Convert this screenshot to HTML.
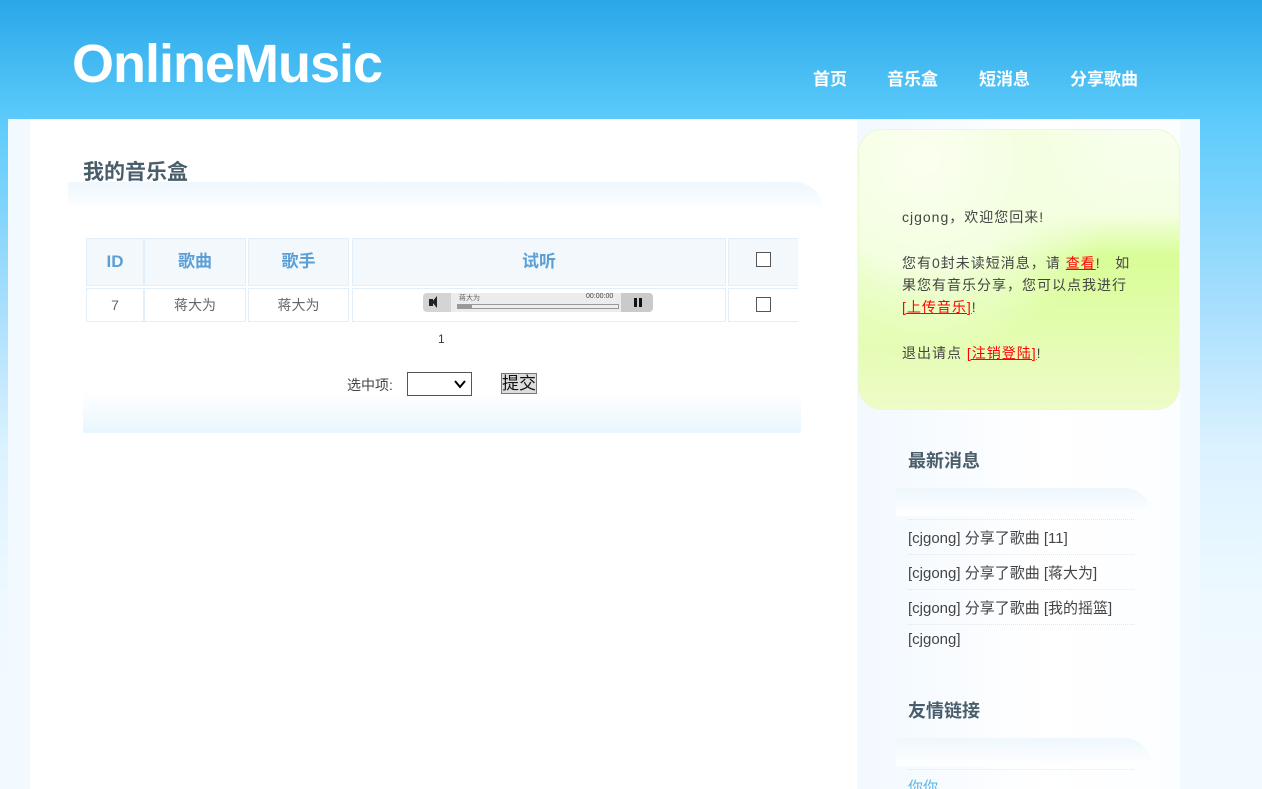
<!DOCTYPE html>
<html><head><meta charset="utf-8"><style>
*{margin:0;padding:0;box-sizing:border-box}
html,body{width:1262px;height:789px;overflow:hidden}
body{font-family:"Liberation Sans","Noto Sans CJK SC",sans-serif;font-size:14px;color:#444;position:relative;
background:linear-gradient(#29a7e8 0px,#5ccbfb 119px,#a5defd 300px,#dcf2ff 450px,#eef9ff 600px,#f2faff 789px)}
.abs{position:absolute}
.logo{left:72px;top:33px;font-size:54px;font-weight:bold;color:#fff;letter-spacing:-1px}
.nav{top:65px;font-size:17px;font-weight:bold;color:#fff}
.wrap{left:8px;top:119px;width:1192px;height:670px;background:#f2f9ff}
.main{left:30px;top:119px;width:827px;height:670px;background:#fff}
.side{left:857px;top:119px;width:323px;height:670px;background:linear-gradient(90deg,#f2f9ff,#fff 60%,#fbfdff)}
h2{font-size:21px;font-weight:bold;color:#4a5d6a}
.band{background:linear-gradient(#eef7fe,#fff)}
.c{position:absolute;border:1px solid #e2eef8;text-align:center;color:#666;font-size:14px}
.h{top:238px;height:48px;background:#f3f8fd;color:#5a9fd6;font-size:17px;font-weight:bold;line-height:46px}
.r{top:288px;height:34px;line-height:32px}
.cb{display:inline-block;width:15px;height:15px;border:1px solid #555;background:#fff;vertical-align:middle}
.green{left:858px;top:129px;width:322px;height:281px;border-radius:24px;
background:radial-gradient(ellipse at 20% 10%,#fbfff0 0,#f3ffe0 30%,transparent 55%),linear-gradient(#f8ffee 0,#f4ffe2 30%,#d9fd98 45%,#e0fda8 65%,#eefcc8 100%);border:1px solid #eafad0}
.gt{left:902px;font-size:14px;color:#444;line-height:22px;white-space:nowrap;letter-spacing:1px}
a{color:red;text-decoration:underline}
.news{left:908px;font-size:15px;color:#444}
.dot{left:908px;width:226px;border-top:1px dotted #dfe8ee}
</style></head><body>
<div class="abs logo">OnlineMusic</div>
<div class="abs nav" style="left:813px">首页</div>
<div class="abs nav" style="left:887px">音乐盒</div>
<div class="abs nav" style="left:979px">短消息</div>
<div class="abs nav" style="left:1070px">分享歌曲</div>

<div class="abs wrap"></div>
<div class="abs main"></div>
<div class="abs side"></div>

<div class="abs band" style="left:68px;top:182px;width:756px;height:30px;border-top-right-radius:30px"></div>
<h2 class="abs" style="left:83px;top:156px">我的音乐盒</h2>

<div class="c h" style="left:86px;width:58px">ID</div>
<div class="c h" style="left:144px;width:102px">歌曲</div>
<div class="c h" style="left:248px;width:101px">歌手</div>
<div class="c h" style="left:352px;width:374px">试听</div>
<div class="c h" style="left:728px;width:70px;border-right:none;font-weight:normal"><span class="cb" style="margin-top:-6px"></span></div>
<div class="c r" style="left:86px;width:58px">7</div>
<div class="c r" style="left:144px;width:102px">蒋大为</div>
<div class="c r" style="left:248px;width:101px">蒋大为</div>
<div class="c r" style="left:352px;width:374px"></div>
<div class="c r" style="left:728px;width:70px;border-right:none"><span class="cb" style="margin-top:-4px"></span></div>

<div class="abs" style="left:423px;top:293px;width:230px;height:19px;background:#ececec;border-radius:4px">
<div class="abs" style="left:0;top:0;width:28px;height:19px;background:#d4d4d4;border-radius:4px 0 0 4px"></div>
<div class="abs" style="left:6px;top:6px;width:4px;height:7px;background:#222"></div>
<div class="abs" style="left:9px;top:3px;width:0;height:0;border-top:6px solid transparent;border-bottom:6px solid transparent;border-right:5px solid #222"></div>
<div class="abs" style="left:36px;top:0px;font-size:7px;color:#666">蒋大为</div>
<div class="abs" style="left:163px;top:0px;font-size:7px;color:#444">00:00:00</div>
<div class="abs" style="left:34px;top:11px;width:162px;height:5px;border:1px solid #999;background:#eee"></div>
<div class="abs" style="left:35px;top:12px;width:14px;height:4px;background:#999"></div>
<div class="abs" style="left:198px;top:0;width:32px;height:19px;background:#cacaca;border-radius:0 4px 4px 0"></div>
<div class="abs" style="left:211px;top:5px;width:3px;height:9px;background:#111"></div>
<div class="abs" style="left:216px;top:5px;width:3px;height:9px;background:#111"></div>
</div>

<div class="abs" style="left:438px;top:332px;font-size:12px;color:#335">1</div>
<div class="abs" style="left:347px;top:375px;font-size:14px;color:#444">选中项:</div>
<div class="abs" style="left:83px;top:392px;width:718px;height:41px;background:linear-gradient(#fff,#e9f6fe)"></div>
<div class="abs" style="left:407px;top:372px;width:65px;height:24px;border:1px solid #555;background:#fff">
<svg class="abs" style="left:46px;top:6px" width="12" height="10"><path d="M1 2 L6 8 L11 2" stroke="#000" stroke-width="2" fill="none"/></svg></div>
<div class="abs" style="left:501px;top:373px;width:36px;height:21px;border:1px solid #777;background:#ddd;font-size:17px;line-height:19px;text-align:center;color:#111">提交</div>

<div class="abs green"></div>
<div class="abs gt" style="top:206px">cjgong，欢迎您回来!</div>
<div class="abs gt" style="top:252px">您有0封未读短消息，请 <a>查看</a>!&nbsp;&nbsp; 如<br>果您有音乐分享，您可以点我进行<br><a>[上传音乐]</a>!</div>
<div class="abs gt" style="top:342px">退出请点 <a>[注销登陆]</a>!</div>

<h2 class="abs" style="left:908px;top:447px;font-size:18px">最新消息</h2>
<div class="abs band" style="left:896px;top:488px;width:256px;height:28px;border-top-right-radius:28px"></div>
<div class="abs dot" style="top:519px"></div>
<div class="abs news" style="top:527px">[cjgong] 分享了歌曲 [11]</div>
<div class="abs dot" style="top:554px"></div>
<div class="abs news" style="top:562px">[cjgong] 分享了歌曲 [蒋大为]</div>
<div class="abs dot" style="top:589px"></div>
<div class="abs news" style="top:597px">[cjgong] 分享了歌曲 [我的摇篮]</div>
<div class="abs dot" style="top:624px"></div>
<div class="abs news" style="top:631px">[cjgong]</div>

<h2 class="abs" style="left:908px;top:697px;font-size:18px">友情链接</h2>
<div class="abs band" style="left:896px;top:738px;width:256px;height:28px;border-top-right-radius:28px"></div>
<div class="abs dot" style="top:769px"></div>
<div class="abs news" style="top:776px;color:#5ab4e8">你你</div>
</body></html>
